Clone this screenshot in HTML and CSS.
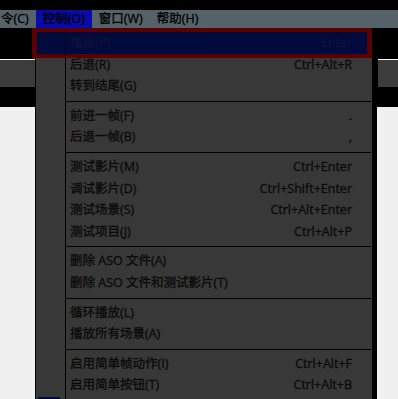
FILE: index.html
```html
<!DOCTYPE html>
<html lang="zh">
<head>
<meta charset="utf-8">
<link rel="stylesheet" href="styles.css">
</head>
<body>
<div class="top"></div>
<div class="menubar">
  <span class="mb-item first">令(C)</span>
  <span class="mb-item active">控制(O)</span>
  <span class="mb-item">窗口(W)</span>
  <span class="mb-item">帮助(H)</span>
</div>
<div class="stage">
  <div class="side left">
    <div class="s-black"></div><div class="s-white"></div><div class="s-gray"></div><div class="s-black2"></div>
  </div>
  <div class="menu">
    <div class="item hl"><span class="ico"></span><span class="label">播放(P)</span><span class="key">Enter</span></div>
    <div class="item"><span class="ico"></span><span class="label">后退(R)</span><span class="key">Ctrl+Alt+R</span></div>
    <div class="item"><span class="ico"></span><span class="label">转到结尾(G)</span><span class="key"></span></div>
    <div class="sep"><span class="ico"></span><span class="line"></span></div>
    <div class="item"><span class="ico"></span><span class="label">前进一帧(F)</span><span class="key">.</span></div>
    <div class="item"><span class="ico"></span><span class="label">后退一帧(B)</span><span class="key">,</span></div>
    <div class="sep"><span class="ico"></span><span class="line"></span></div>
    <div class="item"><span class="ico"></span><span class="label">测试影片(M)</span><span class="key">Ctrl+Enter</span></div>
    <div class="item"><span class="ico"></span><span class="label">调试影片(D)</span><span class="key">Ctrl+Shift+Enter</span></div>
    <div class="item"><span class="ico"></span><span class="label">测试场景(S)</span><span class="key">Ctrl+Alt+Enter</span></div>
    <div class="item"><span class="ico"></span><span class="label">测试项目(J)</span><span class="key">Ctrl+Alt+P</span></div>
    <div class="sep"><span class="ico"></span><span class="line"></span></div>
    <div class="item"><span class="ico"></span><span class="label">删除 ASO 文件(A)</span><span class="key"></span></div>
    <div class="item"><span class="ico"></span><span class="label">删除 ASO 文件和测试影片(T)</span><span class="key"></span></div>
    <div class="sep"><span class="ico"></span><span class="line"></span></div>
    <div class="item"><span class="ico"></span><span class="label">循环播放(L)</span><span class="key"></span></div>
    <div class="item"><span class="ico"></span><span class="label">播放所有场景(A)</span><span class="key"></span></div>
    <div class="sep"><span class="ico"></span><span class="line"></span></div>
    <div class="item"><span class="ico"></span><span class="label">启用简单帧动作(I)</span><span class="key">Ctrl+Alt+F</span></div>
    <div class="item"><span class="ico"></span><span class="label">启用简单按钮(T)</span><span class="key">Ctrl+Alt+B</span></div>
    <div class="item"><span class="ico"><span class="chk"></span></span><span class="label"></span><span class="key"></span></div>
  </div>
  <div class="side right">
    <div class="s-black"></div><div class="s-white"></div><div class="s-gray"></div><div class="s-black2"></div>
  </div>
</div>
</body>
</html>
```

FILE: styles.css
```css
html, body {
  margin: 0;
  width: 398px;
  height: 399px;
  overflow: hidden;
  background: #f0f0f0;
}
body {
  font-family: "Open Sans", "Noto Sans CJK SC", sans-serif;
  font-size: 12.5px;
  color: #0a0a0a;
  -webkit-text-stroke: 0.3px currentColor;
}
.top {
  height: 10px;
  background: #000;
}
.menubar {
  height: 18px;
  line-height: 18px;
  background: #56626a;
  display: flex;
  white-space: nowrap;
}
.mb-item {
  padding: 0 7px;
  color: #000;
}
.mb-item.first {
  padding-left: 1px;
}
.mb-item.active {
  background: #0a0aa8;
}
.stage {
  display: grid;
  grid-template-columns: 35px 342px 21px;
  height: 371px;
}
.side {
  display: flex;
  flex-direction: column;
}
.s-black { height: 31px; background: #000; }
.s-white { height: 1px; background: #fff; }
.s-gray { height: 27px; background: #3c3c3c; }
.s-black2 { height: 20px; background: #000; }
.right > div {
  border-left: 1px solid #000;
}
.menu {
  background: #383838;
  border-left: 1px solid #000;
  border-right: 5px solid #000;
  padding-top: 4px;
  position: relative;
}
.item {
  display: flex;
  height: 21.6px;
  line-height: 21.6px;
  position: relative;
  white-space: nowrap;
}
.ico {
  width: 29px;
  flex: none;
  border-right: 1px solid #000;
  position: relative;
  z-index: 1;
}
.label {
  flex: 1;
  padding-left: 4px;
  position: relative;
  z-index: 1;
}
.key {
  padding-right: 20px;
  position: relative;
  z-index: 1;
}
.item.hl::before {
  content: "";
  position: absolute;
  left: -4px;
  right: 0;
  top: -4px;
  bottom: -4px;
  border-style: solid;
  border-color: #5a0000;
  border-width: 4px 5px;
  background: #000a3c;
}
.item.hl .ico {
  border-right-color: #000522;
}
.item.hl .label, .item.hl .key {
  color: #11113a;
}
.sep {
  display: flex;
  height: 8px;
}
.sep .line {
  flex: 1;
  height: 1px;
  margin: 4px 1px 0 0;
  background: #000;
}
.chk {
  display: block;
  width: 22px;
  height: 20px;
  margin: 1px 0 0 2px;
  background: #000a3c;
}
```
